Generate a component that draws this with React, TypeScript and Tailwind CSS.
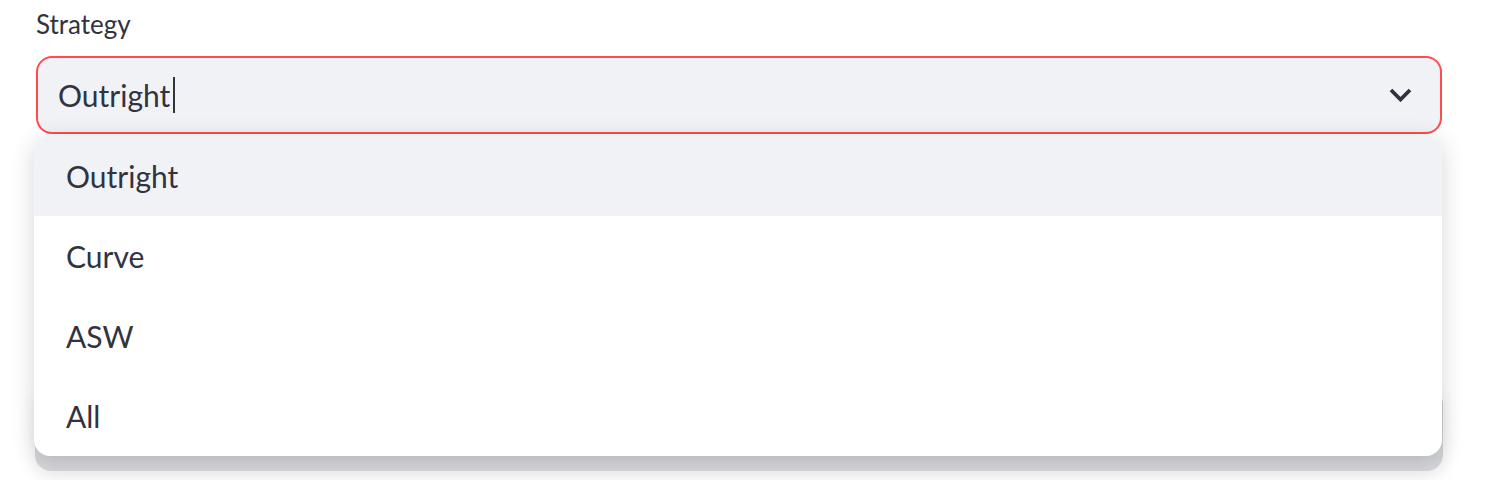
import React from 'react';

const options = ['Outright', 'Curve', 'ASW', 'All'];

export default function App() {
  const [active] = React.useState<string>('Outright');

  return (
    <div
      className="h-[480px] w-full bg-white text-[#31333f]"
      style={{ fontFamily: 'Lato, "Noto Sans", sans-serif' }}
    >
      <div className="relative pl-[36px] pr-[56px] pt-[8px]">
        <label className="block h-[48px] text-[26px] leading-[32px]">Strategy</label>

        {/* select control */}
        <div className="flex h-[78px] items-center rounded-[16px] border-2 border-[#ff4b4b] bg-[#f0f2f6] pl-[20px] pr-[28px]">
          <div className="flex flex-1 items-center text-[30px]">
            <span>Outright</span>
            <span className="ml-[3px] h-[36px] w-[2px] bg-[#31333f]" />
          </div>
          <svg className="h-[14px] w-[23px]" viewBox="0 0 23 14" fill="none">
            <path
              d="M2 2l9.5 9.5L21 2"
              stroke="#31333f"
              strokeWidth={3.8}
              strokeLinecap="butt"
              strokeLinejoin="miter"
            />
          </svg>
        </div>

        {/* element behind the menu */}
        <div className="absolute left-[35px] top-[388px] h-[83px] w-[1408px] rounded-[16px] bg-gradient-to-b from-[#c9cace] to-[#d6d7da] shadow-[0_6px_18px_rgba(0,0,0,0.08)]" />

        {/* dropdown menu */}
        <ul className="absolute left-[34px] top-[136px] w-[1408px] overflow-hidden rounded-[16px] bg-white shadow-[0_4px_24px_rgba(0,0,0,0.16)]">
          {options.map((o) => (
            <li
              key={o}
              className={
                'flex h-[80px] items-center px-[32px] text-[30px] ' +
                (o === active ? 'bg-[#f0f2f6]' : '')
              }
            >
              {o}
            </li>
          ))}
        </ul>
      </div>
    </div>
  );
}
